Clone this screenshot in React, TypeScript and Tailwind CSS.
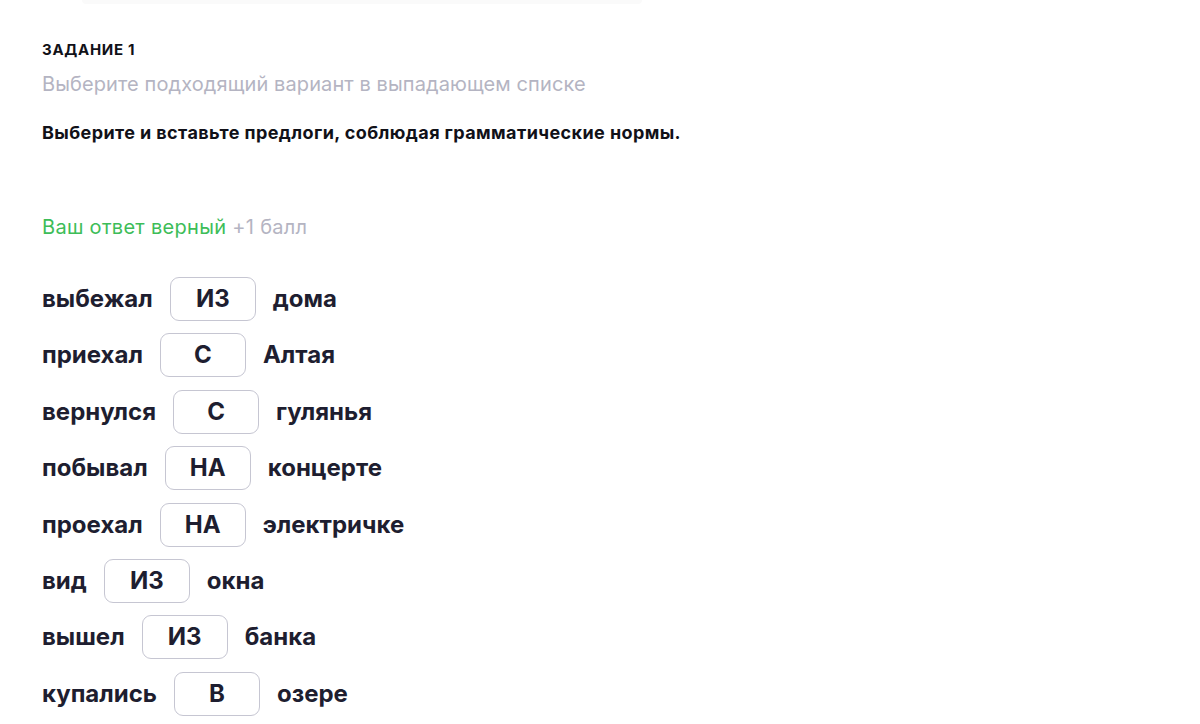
const rows = [
  { before: 'выбежал', answer: 'ИЗ', after: 'дома' },
  { before: 'приехал', answer: 'С', after: 'Алтая' },
  { before: 'вернулся', answer: 'С', after: 'гулянья' },
  { before: 'побывал', answer: 'НА', after: 'концерте' },
  { before: 'проехал', answer: 'НА', after: 'электричке' },
  { before: 'вид', answer: 'ИЗ', after: 'окна' },
  { before: 'вышел', answer: 'ИЗ', after: 'банка' },
  { before: 'купались', answer: 'В', after: 'озере' },
]

const App = () => {
  return (
    <div className="w-[1200px] h-[724px] overflow-hidden bg-white font-['Inter','Noto_Sans',sans-serif] text-[#1e1e30]">
      {/* faint edge of the card above */}
      <div className="ml-[82px] w-[560px] h-[4px] bg-[#fafafa] rounded-b" />

      <div className="pl-[42px] pt-[36px]">
        <p className="text-[15px] font-bold leading-[20px] tracking-[0.7px] text-[#111118]">ЗАДАНИЕ 1</p>
        <p className="mt-[11px] text-[20px] leading-[26px] tracking-[0.1px] text-[#b4b4c2]">
          Выберите подходящий вариант в выпадающем списке
        </p>
        <p className="mt-[24px] text-[18px] font-bold leading-[24px] tracking-[0.4px] text-[#111118]">
          Выберите и вставьте предлоги, соблюдая грамматические нормы.
        </p>

        <p className="mt-[69px] text-[20px] leading-[26px] tracking-[0.3px]">
          <span className="text-[#3dbd58]">Ваш ответ верный</span>{' '}
          <span className="text-[#b4b4c2]">+1 балл</span>
        </p>

        <div className="mt-[37px] flex flex-col gap-[12.4px]">
          {rows.map((row, i) => (
            <div key={i} className="flex items-center gap-[17px] text-[24px] font-bold leading-[30px]">
              <span>{row.before}</span>
              <div className="w-[86px] h-[44px] rounded-[9px] border border-[#c6c6d2] flex items-center justify-center">
                {row.answer}
              </div>
              <span>{row.after}</span>
            </div>
          ))}
        </div>
      </div>
    </div>
  )
}

export default App
